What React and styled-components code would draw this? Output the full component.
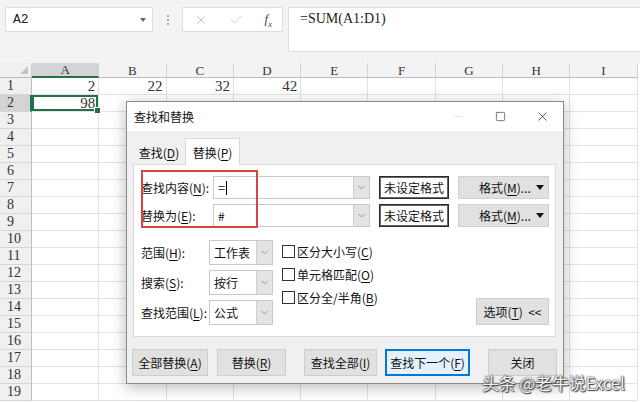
import React from 'react'
import styled, { createGlobalStyle } from 'styled-components'
import { X, Check, Minus, Square, ChevronDown } from 'lucide-react'

const GlobalStyle = createGlobalStyle`
  html, body { margin: 0; padding: 0; background: #fff; }
  body { font-family: "Noto Sans CJK SC", "Noto Sans", sans-serif; }
  * { box-sizing: border-box; }
`

const Screen = styled.div`
  position: relative;
  width: 640px;
  height: 402px;
  overflow: hidden;
  display: flex;
  flex-direction: column;
  background: #fff;
`

/////////////  formula bar
const FormulaBar = styled.div`
  height: 63px;
  flex-shrink: 0;
  background: #f3f3f3;
  display: flex;
  align-items: flex-start;
  padding: 7px 0 0 5px;
`

const NameBox = styled.div`
  width: 148px;
  height: 25px;
  background: #fff;
  border: 1px solid #dedede;
  display: flex;
  align-items: center;
  justify-content: space-between;
  padding: 0 6px 0 7px;
  font-family: "Liberation Mono", monospace;
  font-size: 13px;
  color: #222;
`

const Caret = styled.span`
  width: 0;
  height: 0;
  border-left: 3.5px solid transparent;
  border-right: 3.5px solid transparent;
  border-top: 4px solid #666;
`

const Dots = styled.div`
  width: 29px;
  height: 25px;
  display: flex;
  flex-direction: column;
  align-items: center;
  justify-content: center;
  gap: 2px;
  span {
    width: 2px;
    height: 2px;
    background: #aaa;
  }
`

const FxBox = styled.div`
  width: 101px;
  height: 25px;
  background: #fff;
  border: 1px solid #dedede;
  display: flex;
  align-items: center;
  justify-content: space-between;
  padding: 0 10px 0 11px;
  color: #b8b8b8;
`

const Fx = styled.span`
  font-family: "Liberation Serif", serif;
  font-style: italic;
  font-size: 13px;
  color: #444;
  sub { font-size: 9px; }
`

const FormulaInput = styled.div`
  flex: 1;
  margin-left: 5px;
  height: 45px;
  background: #fff;
  border: 1px solid #dedede;
  border-right: none;
  padding: 3px 11px;
  font-family: "Liberation Serif", serif;
  font-size: 14px;
  color: #222;
`

/////////////  sheet grid
const Sheet = styled.div`
  flex: 1;
  display: grid;
  grid-template-columns: 32px repeat(9, 67.3px);
  grid-template-rows: 15px repeat(19, 17px);
  font-family: "Liberation Serif", serif;
  color: #333;
`

const Corner = styled.div`
  background: #f0f0f0;
  border-right: 1px solid #cfcfcf;
  border-bottom: 1px solid #bdbdbd;
  position: relative;
  &::after {
    content: '';
    position: absolute;
    right: 3px;
    bottom: 3px;
    border-left: 8px solid transparent;
    border-bottom: 8px solid #c4c4c4;
  }
`

const ColHead = styled.div`
  background: ${(p) => (p.$on ? '#d4d4d4' : '#f3f3f3')};
  border-right: 1px solid #d2d2d2;
  border-bottom: ${(p) => (p.$on ? '2px solid #217346' : '1px solid #bdbdbd')};
  display: flex;
  align-items: center;
  justify-content: center;
  font-size: 13px;
  line-height: 1;
`

const RowHead = styled.div`
  background: ${(p) => (p.$on ? '#d4d4d4' : '#f0f0f0')};
  border-right: ${(p) => (p.$on ? '2px solid #217346' : '1px solid #bdbdbd')};
  border-bottom: 1px solid #d6d6d6;
  display: flex;
  align-items: center;
  padding-left: 7px;
  font-size: 14px;
  line-height: 1;
`

const Cell = styled.div`
  position: relative;
  border-right: 1px solid #e2e2e2;
  border-bottom: 1px solid #e2e2e2;
  display: flex;
  align-items: center;
  justify-content: flex-end;
  padding-right: 3px;
  font-size: 15px;
  line-height: 1;
  ${(p) =>
    p.$active &&
    `
    box-shadow: inset 0 0 0 2px #217346;
    &::after {
      content: '';
      position: absolute;
      right: -3px;
      bottom: -3px;
      width: 5px;
      height: 5px;
      background: #217346;
      border: 1px solid #fff;
      z-index: 2;
    }
  `}
`

/////////////  dialog
const Dialog = styled.div`
  position: absolute;
  left: 126px;
  top: 101px;
  width: 438px;
  height: 283px;
  background: #f0f0f0;
  border: 1px solid #8c8c8c;
  box-shadow: 0 3px 14px rgba(0, 0, 0, 0.28);
  display: flex;
  flex-direction: column;
  font-size: 12px;
  color: #111;
  u { text-underline-offset: 2px; }
`

const TitleBar = styled.div`
  height: 29px;
  flex-shrink: 0;
  background: #fff;
  display: flex;
  align-items: center;
  padding-left: 7px;
`

const Title = styled.div`
  flex: 1;
  font-size: 12px;
`

const WinBtn = styled.div`
  width: 42px;
  height: 29px;
  display: flex;
  align-items: center;
  justify-content: center;
  color: ${(p) => (p.$dim ? '#c4c4c4' : '#222')};
`

const Body = styled.div`
  flex: 1;
  display: flex;
  flex-direction: column;
  padding: 7px 7px 0 6px;
`

const Tabs = styled.div`
  display: flex;
  height: 26px;
  align-items: stretch;
`

const Tab = styled.div`
  display: flex;
  align-items: center;
  justify-content: center;
  width: ${(p) => p.$w}px;
  background: ${(p) => (p.$active ? '#fff' : 'transparent')};
  border: 1px solid ${(p) => (p.$active ? '#d9d9d9' : 'transparent')};
  border-bottom: none;
  margin-bottom: -1px;
  position: relative;
  z-index: 1;
`

const Panel = styled.div`
  position: relative;
  width: 423px;
  height: 173px;
  background: #fff;
  border: 1px solid #d9d9d9;
  padding: 11px 6px 0 7px;
  display: flex;
  flex-direction: column;
`

const FieldRow = styled.div`
  display: flex;
  align-items: center;
  height: 23px;
  margin-bottom: 5px;
`

const Label = styled.div`
  width: ${(p) => p.$w}px;
  flex-shrink: 0;
  white-space: nowrap;
`

const Combo = styled.div`
  width: ${(p) => p.$w}px;
  height: ${(p) => p.$h}px;
  flex-shrink: 0;
  display: flex;
  border: 1px solid #c9c9c9;
  background: #fff;
`

const ComboText = styled.div`
  flex: 1;
  display: flex;
  align-items: center;
  padding-left: ${(p) => p.$pad || 4}px;
  font-size: ${(p) => p.$size || 12}px;
`

const Cursor = styled.span`
  display: inline-block;
  width: 1px;
  height: 14px;
  background: #000;
  margin-left: 1px;
`

const DropBtn = styled.div`
  width: 16px;
  background: #e3e3e3;
  border-left: 1px solid #cfcfcf;
  display: flex;
  align-items: center;
  justify-content: center;
  color: #555;
`

const FormatBtn = styled.div`
  width: 70px;
  height: 23px;
  margin-left: 9px;
  border: 1px solid #2b2b2b;
  box-shadow: inset 0 0 0 1px #666;
  background: #fff;
  display: flex;
  align-items: center;
  justify-content: center;
`

const MenuBtn = styled.div`
  width: 91px;
  height: 23px;
  margin-left: 9px;
  background: #e1e1e1;
  border: 1px solid #d0d0d0;
  display: flex;
  align-items: center;
  justify-content: space-between;
  padding: 0 4px 0 20px;
`

const DownTri = styled.span`
  width: 0;
  height: 0;
  border-left: 4px solid transparent;
  border-right: 4px solid transparent;
  border-top: 5px solid #111;
`

const RedMark = styled.div`
  position: absolute;
  left: 7px;
  top: 5px;
  width: 117px;
  height: 58px;
  border: 2px solid #d6453f;
  pointer-events: none;
`

const Options = styled.div`
  display: flex;
  align-items: flex-start;
  margin-top: 8px;
`

const SelectCol = styled.div`
  display: flex;
  flex-direction: column;
  gap: 5px;
`

const SelectRow = styled.div`
  display: flex;
  align-items: center;
`

const CheckCol = styled.div`
  margin-left: 9px;
  display: flex;
  flex-direction: column;
`

const CheckRow = styled.div`
  height: 23px;
  display: flex;
  align-items: center;
`

const Box = styled.span`
  width: 13px;
  height: 13px;
  border: 1px solid #333;
  background: #fff;
  margin-right: 2px;
`

const Button = styled.div`
  width: ${(p) => p.$w}px;
  height: 27px;
  margin-left: ${(p) => (p.$push ? 'auto' : `${p.$ml || 0}px`)};
  margin-top: ${(p) => p.$mt || 0}px;
  flex-shrink: 0;
  background: ${(p) => (p.$primary ? '#e5f1fb' : '#e1e1e1')};
  border: ${(p) => (p.$primary ? '2px solid #0078d7' : '1px solid #cdcdcd')};
  display: flex;
  align-items: center;
  justify-content: center;
  white-space: nowrap;
`

const ButtonRow = styled.div`
  display: flex;
  margin: 12px 0 0 -1px;
`

const Watermark = styled.div`
  position: absolute;
  left: 482px;
  top: 370px;
  font-size: 17px;
  color: #f4f4f4;
  letter-spacing: -0.2px;
  text-shadow: 0 0 1px #333, 0 0 2px #333, 1px 1px 1px #444;
  white-space: nowrap;
`

const COLS = ['A', 'B', 'C', 'D', 'E', 'F', 'G', 'H', 'I']
const DATA = { '1-0': '2', '1-1': '22', '1-2': '32', '1-3': '42', '2-0': '98' }

const Select = ({ label, value }) => (
  <SelectRow>
    <Label $w={68}>{label}</Label>
    <Combo $w={64} $h={25}>
      <ComboText>{value}</ComboText>
      <DropBtn>
        <ChevronDown size={11} strokeWidth={1.2} />
      </DropBtn>
    </Combo>
  </SelectRow>
)

const FindRow = ({ label, children }) => (
  <FieldRow>
    <Label $w={72}>{label}</Label>
    <Combo $w={157} $h={23}>
      {children}
      <DropBtn>
        <ChevronDown size={11} strokeWidth={1.2} />
      </DropBtn>
    </Combo>
    <FormatBtn>未设定格式</FormatBtn>
    <MenuBtn>
      <span>
        格式(<u>M</u>)...
      </span>
      <DownTri />
    </MenuBtn>
  </FieldRow>
)

const App = () => {
  const rows = Array.from({ length: 19 }, (_, i) => i + 1)

  return (
    <Screen>
      <GlobalStyle />
      <FormulaBar>
        <NameBox>
          A2
          <Caret />
        </NameBox>
        <Dots>
          <span />
          <span />
          <span />
        </Dots>
        <FxBox>
          <X size={14} strokeWidth={1.3} />
          <Check size={14} strokeWidth={1.3} />
          <Fx>
            f<sub>x</sub>
          </Fx>
        </FxBox>
        <FormulaInput>=SUM(A1:D1)</FormulaInput>
      </FormulaBar>

      <Sheet>
        <Corner />
        {COLS.map((c, i) => (
          <ColHead key={c} $on={i === 0}>
            {c}
          </ColHead>
        ))}
        {rows.map((r) => (
          <React.Fragment key={r}>
            <RowHead $on={r === 2}>{r}</RowHead>
            {COLS.map((c, i) => (
              <Cell key={c} $active={r === 2 && i === 0}>
                {DATA[`${r}-${i}`]}
              </Cell>
            ))}
          </React.Fragment>
        ))}
      </Sheet>

      <Dialog>
        <TitleBar>
          <Title>查找和替换</Title>
          <WinBtn $dim>
            <Minus size={13} strokeWidth={1} />
          </WinBtn>
          <WinBtn>
            <Square size={11} strokeWidth={1.3} />
          </WinBtn>
          <WinBtn>
            <X size={15} strokeWidth={1.1} />
          </WinBtn>
        </TitleBar>

        <Body>
          <Tabs>
            <Tab $w={52}>
              查找(<u>D</u>)
            </Tab>
            <Tab $w={55} $active>
              替换(<u>P</u>)
            </Tab>
          </Tabs>

          <Panel>
            <FindRow label={<>查找内容(<u>N</u>):</>}>
              <ComboText $size={13}>
                =<Cursor />
              </ComboText>
            </FindRow>
            <FindRow label={<>替换为(<u>E</u>):</>}>
              <ComboText>#</ComboText>
            </FindRow>
            <RedMark />

            <Options>
              <SelectCol>
                <Select label={<>范围(<u>H</u>):</>} value="工作表" />
                <Select label={<>搜索(<u>S</u>):</>} value="按行" />
                <Select label={<>查找范围(<u>L</u>):</>} value="公式" />
              </SelectCol>

              <CheckCol>
                <CheckRow>
                  <Box />
                  区分大小写(<u>C</u>)
                </CheckRow>
                <CheckRow>
                  <Box />
                  单元格匹配(<u>O</u>)
                </CheckRow>
                <CheckRow>
                  <Box />
                  区分全/半角(<u>B</u>)
                </CheckRow>
              </CheckCol>

              <Button $w={73} $mt={58} $push>
                选项(<u>T</u>)&nbsp;&nbsp;&lt;&lt;
              </Button>
            </Options>
          </Panel>

          <ButtonRow>
            <Button $w={76}>
              全部替换(<u>A</u>)
            </Button>
            <Button $w={69} $ml={9}>
              替换(<u>R</u>)
            </Button>
            <Button $w={73} $ml={18}>
              查找全部(<u>I</u>)
            </Button>
            <Button $w={85} $ml={8} $primary>
              查找下一个(<u>F</u>)
            </Button>
            <Button $w={69} $ml={18}>
              关闭
            </Button>
          </ButtonRow>
        </Body>
      </Dialog>

      <Watermark>头条 @老牛说Excel</Watermark>
    </Screen>
  )
}

export default App
